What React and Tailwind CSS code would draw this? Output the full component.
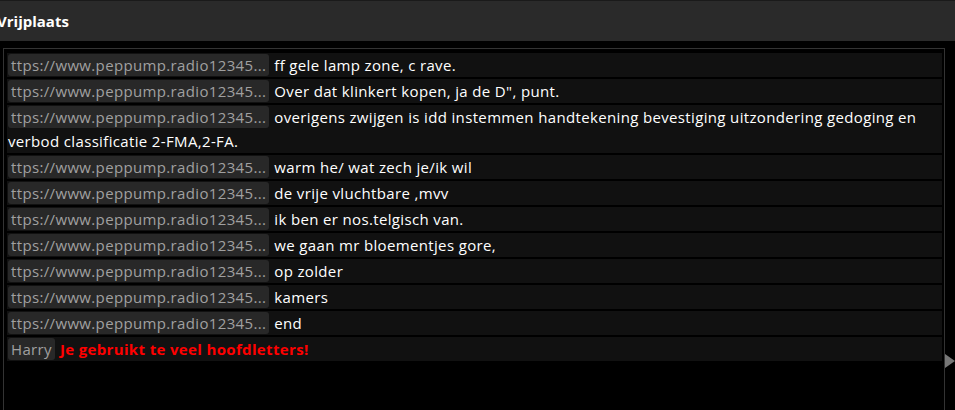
import React from 'react';

const rows = [
  { user: 'ttps://www.peppump.radio12345...', text: 'ff gele lamp zone, c rave.' },
  { user: 'ttps://www.peppump.radio12345...', text: 'Over dat klinkert kopen, ja de D", punt.' },
  {
    user: 'ttps://www.peppump.radio12345...',
    text: 'overigens zwijgen is idd instemmen handtekening bevestiging uitzondering gedoging en verbod classificatie 2-FMA,2-FA.',
  },
  { user: 'ttps://www.peppump.radio12345...', text: 'warm he/ wat zech je/ik wil' },
  { user: 'ttps://www.peppump.radio12345...', text: 'de vrije vluchtbare ,mvv' },
  { user: 'ttps://www.peppump.radio12345...', text: 'ik ben er nos.telgisch van.' },
  { user: 'ttps://www.peppump.radio12345...', text: 'we gaan mr bloementjes gore,' },
  { user: 'ttps://www.peppump.radio12345...', text: 'op zolder' },
  { user: 'ttps://www.peppump.radio12345...', text: 'kamers' },
  { user: 'ttps://www.peppump.radio12345...', text: 'end' },
];

const Row = ({ user, text, warn }) => (
  <div className="mb-[2px] bg-[#111111] pl-[1px] pr-[20px] text-[15px] leading-[24px] tracking-[0.35px]">
    <span className="mr-[5px] mt-[1px] inline-block rounded-[3px] bg-[#282828] px-[3px] align-top leading-[22px] text-[#a0a0a0]">
      {user}
    </span>
    {warn ? (
      <span className="font-bold text-[#ff0000]">{text}</span>
    ) : (
      <span className="text-white">{text}</span>
    )}
  </div>
);

export default function App() {
  return (
    <div
      className="h-[410px] w-[955px] overflow-hidden bg-black"
      style={{ fontFamily: '"Open Sans", Lato, sans-serif' }}
    >
      <div className="flex h-[41px] items-center border-t border-[#1a1a1a] bg-[#2a2a2a]">
        <h1 className="ml-[-3px] text-[15px] font-bold text-white">Vrijplaats</h1>
      </div>
      <div className="flex pt-[7px]">
        <div className="ml-[3px] h-[400px] w-[942px] border-l border-r border-t border-[#333333] pl-[3px] pr-[2px] pt-[4px]">
          {rows.map((r, i) => (
            <Row key={i} user={r.user} text={r.text} />
          ))}
          <Row user="Harry" text="Je gebruikt te veel hoofdletters!" warn />
        </div>
        <div className="flex w-[10px] flex-col pt-[306px]">
          <svg width="10" height="14" viewBox="0 0 10 14">
            <polygon points="0,0 10,7 0,14" fill="#777777" />
          </svg>
        </div>
      </div>
    </div>
  );
}
